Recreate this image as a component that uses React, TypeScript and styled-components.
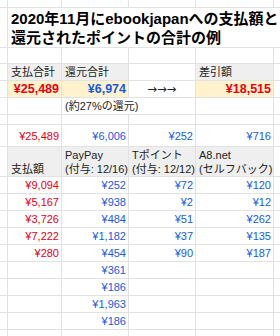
import React from "react";
import styled, { createGlobalStyle } from "styled-components";

const GlobalStyle = createGlobalStyle`
  html, body {
    margin: 0;
    padding: 0;
    background: #ffffff;
  }
  body {
    font-family: "Liberation Sans", Arial, "Noto Sans CJK JP", sans-serif;
  }
`;

const RED = "#e60012";
const BLUE = "#1a5ae0";

const Sheet = styled.div`
  display: grid;
  grid-template-columns: 7px 53px 66px 66px 77px 6px;
  grid-template-rows: 7px 39px 15px 16px 16px 16px 9px 21px 29px repeat(9, 16px) 6px;
  gap: 1px;
  width: 280px;
  height: 336px;
  background: #e2e2e2;
  overflow: hidden;
`;

const Cell = styled.div<{ $span?: number }>`
  background: #ffffff;
  min-width: 0;
  display: flex;
  white-space: nowrap;
  overflow: visible;
  position: relative;
  font-size: 11px;
  line-height: 16px;
  color: #222222;
  grid-column: ${(p) => (p.$span ? `span ${p.$span}` : "auto")};
`;

const TitleCell = styled(Cell)`
  align-items: center;
  padding-left: 3px;
  font-size: 15px;
  font-weight: bold;
  line-height: 19px;
  color: #000000;
  z-index: 1;
`;

const HeaderCell = styled(Cell)`
  background: #efefef;
  align-items: center;
  padding-left: 3px;
`;

const ValueCell = styled(Cell)<{ $tone: "red" | "blue" }>`
  background: #fff2cc;
  align-items: center;
  justify-content: flex-end;
  padding-right: 2px;
  font-size: 12.5px;
  font-weight: bold;
  color: ${(p) => (p.$tone === "red" ? RED : BLUE)};
`;

const ArrowCell = styled(Cell)`
  align-items: center;
  justify-content: center;
  font-family: "DejaVu Sans", sans-serif;
  font-size: 11.5px;
  color: #222222;
`;

const NoteCell = styled(Cell)`
  align-items: center;
  padding-left: 3px;
`;

const AmountCell = styled(Cell)<{ $tone: "red" | "blue" }>`
  align-items: center;
  justify-content: flex-end;
  padding-right: 2px;
  color: ${(p) => (p.$tone === "red" ? RED : BLUE)};
`;

const ColumnHead = styled(Cell)`
  background: #efefef;
  flex-direction: column;
  justify-content: flex-end;
  padding-left: 3px;
  line-height: 14px;
  padding-bottom: 0px;
`;

const Blank = () => <Cell />;

const blanks = (n: number, key: string) =>
  Array.from({ length: n }, (_, i) => <Blank key={`${key}-${i}`} />);

type Row = [string, string, string, string];

const dataRows: Row[] = [
  ["¥9,094", "¥252", "¥72", "¥120"],
  ["¥5,167", "¥938", "¥2", "¥12"],
  ["¥3,726", "¥484", "¥51", "¥262"],
  ["¥7,222", "¥1,182", "¥37", "¥135"],
  ["¥280", "¥454", "¥90", "¥187"],
  ["", "¥361", "", ""],
  ["", "¥186", "", ""],
  ["", "¥1,963", "", ""],
  ["", "¥186", "", ""],
];

export default function App() {
  return (
    <>
      <GlobalStyle />
      <Sheet>
        {blanks(6, "r0")}

        <Blank />
        <TitleCell $span={5}>
          2020年11月にebookjapanへの支払額と
          <br />
          還元されたポイントの合計の例
        </TitleCell>

        {blanks(6, "r2")}

        <Blank />
        <HeaderCell>支払合計</HeaderCell>
        <HeaderCell>還元合計</HeaderCell>
        <Blank />
        <HeaderCell>差引額</HeaderCell>
        <Blank />

        <Blank />
        <ValueCell $tone="red">¥25,489</ValueCell>
        <ValueCell $tone="blue">¥6,974</ValueCell>
        <ArrowCell>→→→</ArrowCell>
        <ValueCell $tone="red">¥18,515</ValueCell>
        <Blank />

        <Blank />
        <Blank />
        <NoteCell $span={2}>(約27%の還元)</NoteCell>
        <Blank />
        <Blank />

        {blanks(6, "r6")}

        <Blank />
        <AmountCell $tone="red">¥25,489</AmountCell>
        <AmountCell $tone="blue">¥6,006</AmountCell>
        <AmountCell $tone="blue">¥252</AmountCell>
        <AmountCell $tone="blue">¥716</AmountCell>
        <Blank />

        <Blank />
        <ColumnHead>
          <span>支払額</span>
        </ColumnHead>
        <ColumnHead>
          <span>PayPay</span>
          <span>(付与: 12/16)</span>
        </ColumnHead>
        <ColumnHead>
          <span>Tポイント</span>
          <span>(付与: 12/12)</span>
        </ColumnHead>
        <ColumnHead>
          <span>A8.net</span>
          <span>(セルフバック)</span>
        </ColumnHead>
        <Blank />

        {dataRows.map((row, i) => (
          <React.Fragment key={`d${i}`}>
            <Blank />
            <AmountCell $tone="red">{row[0]}</AmountCell>
            <AmountCell $tone="blue">{row[1]}</AmountCell>
            <AmountCell $tone="blue">{row[2]}</AmountCell>
            <AmountCell $tone="blue">{row[3]}</AmountCell>
            <Blank />
          </React.Fragment>
        ))}

        {blanks(6, "rl")}
      </Sheet>
    </>
  );
}
